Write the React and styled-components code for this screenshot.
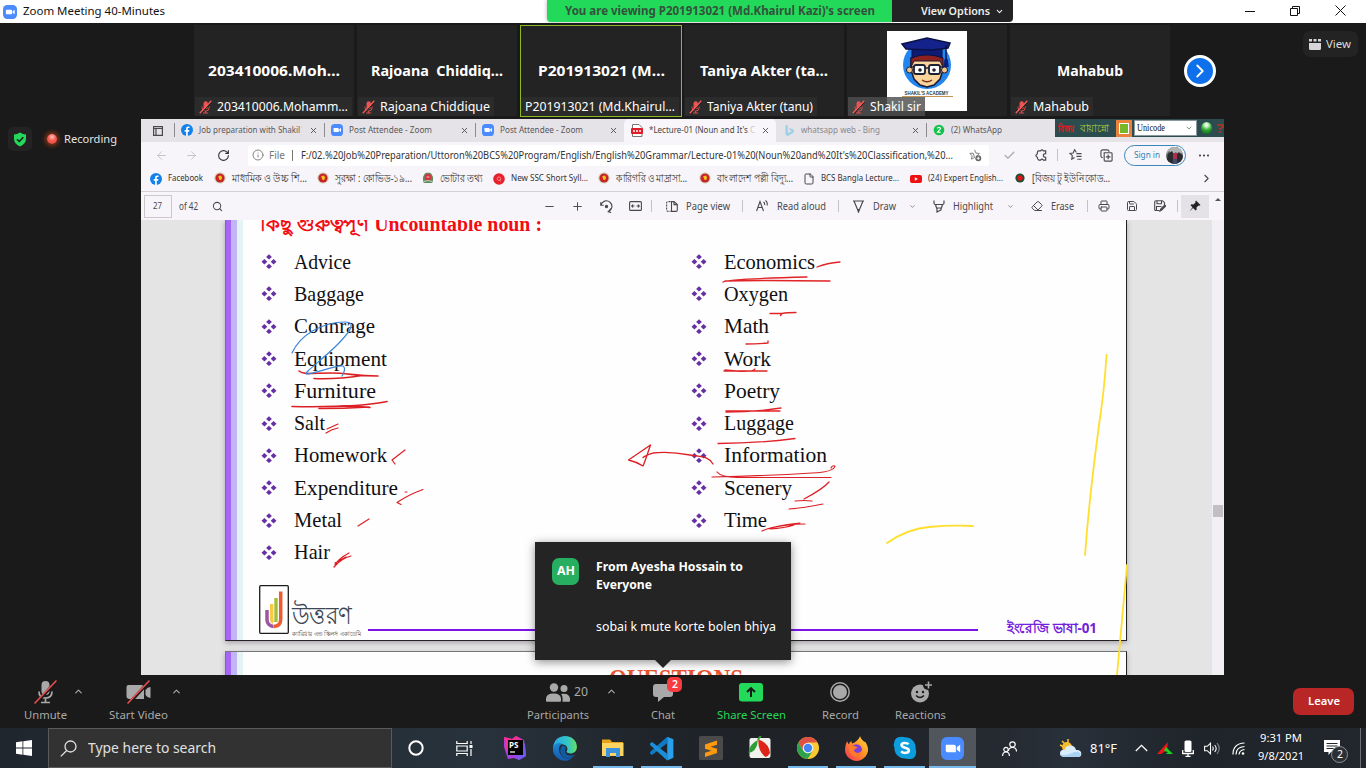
import React, { useLayoutEffect, useRef, useState } from "react";
import styled, { createGlobalStyle, css } from "styled-components";
import {
  ArrowLeft, ArrowRight, RotateCw, Info, Check, Search, Minus, Plus, ChevronDown, ChevronUp,
  ChevronRight, X, Printer, Save, Eraser, File as FileIcon,
} from "lucide-react";

const sans = `"Noto Sans", "Open Sans", sans-serif`;
const serif = `"Liberation Serif", "DejaVu Serif", serif`;

const Global = createGlobalStyle`
  * { box-sizing: border-box; }
  html, body { margin: 0; width: 1366px; height: 768px; overflow: hidden; background: #1a1a1a; }
  body { font-family: ${sans}; font-size: 11px; }
  svg { display: block; flex: none; }
`;

/* ---------- text that keeps a fixed measure ---------- */
const Measure = styled.span`
  display: block;
  flex: 0 0 auto;
  width: ${(p) => p.$w}px;
  margin-left: ${(p) => p.$ml || 0}px;
  white-space: nowrap;
  font-family: ${(p) => p.$family || sans};
  font-size: ${(p) => p.$size || 11}px;
  font-weight: ${(p) => p.$weight || 400};
  line-height: ${(p) => p.$lh || 1.3};
  color: ${(p) => p.$color || "inherit"};
`;
const Run = styled.span`
  display: inline-block;
  white-space: pre;
  transform-origin: 0 50%;
`;
function Fit({ w, children, ...rest }) {
  const ref = useRef(null);
  const [k, setK] = useState(1);
  useLayoutEffect(() => {
    if (ref.current && ref.current.offsetWidth) setK(w / ref.current.getBoundingClientRect().width);
  }, []);
  return (
    <Measure $w={w} {...rest}>
      <Run ref={ref} style={{ transform: `scaleX(${k})` }}>{children}</Run>
    </Measure>
  );
}

const Cell = styled.div`
  flex: 0 0 ${(p) => p.$w}px;
  margin-left: ${(p) => p.$ml || 0}px;
  display: flex;
  align-items: center;
  justify-content: center;
  height: 100%;
`;
const Rule = styled.i`
  display: block;
  width: 1px;
  height: ${(p) => p.$h || 12}px;
  background: ${(p) => p.$color || "#c4c2c6"};
`;
const Draw = styled.svg.attrs((p) => ({ width: p.$w, height: p.$h || p.$w, fill: "none", stroke: "currentColor" }))``;

/* ---------- window chrome ---------- */
const Window = styled.div`
  width: 1366px;
  height: 768px;
  display: flex;
  flex-direction: column;
  overflow: hidden;
  position: relative;
`;
const TitleBar = styled.header`
  height: 23px;
  background: #fff;
  color: #111;
  display: flex;
  align-items: flex-start;
`;
const TitleLeft = styled.div`
  width: 547px;
  height: 23px;
  display: flex;
  align-items: center;
  gap: 6px;
  padding-left: 3px;
`;
const ViewingBanner = styled.div`
  width: 345px;
  height: 22px;
  padding-left: 18px;
  display: flex;
  align-items: center;
  background: #23d959;
  border-radius: 0 0 0 4px;
  box-shadow: 0 0 4px rgba(0, 0, 0, 0.3);
`;
const ViewOptions = styled.div`
  width: 121px;
  height: 22px;
  padding-left: 29px;
  display: flex;
  align-items: center;
  gap: 5px;
  background: #232325;
  color: #eee;
  border-radius: 0 0 4px 0;
`;
const Controls = styled.div`
  margin-left: 227px;
  height: 21px;
  display: flex;
  align-items: center;
`;

/* ---------- gallery ---------- */
const Gallery = styled.section`
  height: 96px;
  display: flex;
  padding: 2px 0 0 194px;
  background: #1a1a1a;
`;
const Tile = styled.div`
  flex: 0 0 ${(p) => (p.$active ? 162 : 160)}px;
  height: ${(p) => (p.$active ? 92 : 91)}px;
  margin-right: ${(p) => (p.$active ? 2 : 3)}px;
  background: #232323;
  outline: ${(p) => (p.$active ? "1px solid #8bb926" : "none")};
  outline-offset: -1px;
  display: flex;
  align-items: center;
  justify-content: center;
  position: relative;
  color: #fff;
`;
const NameTag = styled.div`
  position: absolute;
  left: 1px;
  bottom: ${(p) => (p.$active ? 1 : 0)}px;
  height: 19px;
  display: flex;
  align-items: center;
  gap: 6px;
  padding: 1px 4px 0;
  background: ${(p) => (p.$light ? "rgba(78,78,78,.82)" : "#2b2b2b")};
  color: #fff;
`;
const NextButton = styled.div`
  width: 32px;
  height: 32px;
  margin: 30px 0 0 11px;
  border-radius: 50%;
  border: 3px solid #fff;
  background: #0e71eb;
  color: #fff;
  display: flex;
  align-items: center;
  justify-content: center;
`;
const ViewButton = styled.div`
  width: 55px;
  height: 26px;
  margin: 6px 0 0 87px;
  border-radius: 7px;
  background: #232323;
  color: #ddd;
  display: flex;
  align-items: center;
  padding-left: 6px;
  gap: 5px;
`;

const Stage = styled.main`
  height: 556px;
  display: flex;
  background: #1a1a1a;
`;
const Status = styled.aside`
  width: 141px;
  padding: 8px 0 0 8px;
  display: flex;
  align-items: flex-start;
  color: #e4e4e4;
`;
const ShieldBox = styled.div`
  width: 24px;
  height: 24px;
  border-radius: 5px;
  background: #232323;
  display: flex;
  align-items: center;
  justify-content: center;
`;
const RecordingRow = styled.div`
  height: 24px;
  margin-left: 15px;
  display: flex;
  align-items: center;
  gap: 7px;
`;
const RecDot = styled.i`
  width: 10px;
  height: 10px;
  border-radius: 50%;
  background: radial-gradient(circle at 50% 30%, #ffc0bc 0, #f65b50 45%, #e5443a 100%);
  box-shadow: 0 0 4px 2px rgba(205, 70, 20, 0.6);
`;

/* ---------- shared browser ---------- */
const Screen = styled.section`
  width: 1083px;
  height: 556px;
  overflow: hidden;
  background: #f7f5f9;
  color: #4a484c;
  display: flex;
  flex-direction: column;
`;
const TabBar = styled.div`
  height: 23px;
  display: flex;
  background: #e5e3e7;
`;
const Tab = styled.div`
  flex: 0 0 ${(p) => p.$w}px;
  height: 23px;
  padding-left: 7px;
  padding-bottom: 1px;
  display: flex;
  align-items: center;
  gap: 6px;
  color: #59575b;
  ${(p) => p.$active && css`background: #f8f6fa; border-radius: 5px 5px 0 0; color: #444;`}
  ${(p) => p.$pale && css`color: #8a888c;`}
`;
const TabRule = styled.i`
  width: 1px;
  height: 14px;
  margin: 4px -1px 0 0;
  background: #8d8b8f;
`;
const TabClose = styled.span`
  margin-left: auto;
  margin-right: 6px;
  color: #555;
`;
const Faded = styled.span`
  color: #c9c7cb;
`;
const ImeBar = styled.div`
  width: 170px;
  height: 18px;
  display: flex;
  align-items: center;
  background: #2b4d50;
  overflow: hidden;
`;
const ImeStatus = styled.div`
  width: 17px;
  height: 17px;
  border: 3px solid #e8823c;
  background: #fff;
  padding: 1px;
  margin-left: 7px;
`;
const ImeFill = styled.i`
  display: block;
  height: 100%;
  background: #77b82a;
`;
const ImeSelect = styled.div`
  width: 68px;
  height: 16px;
  margin-left: 2px;
  padding: 0 3px 0 2px;
  background: #fff;
  border: 1px solid #8a9a9c;
  display: flex;
  align-items: center;
  justify-content: space-between;
  color: #555;
`;
const ImeOrb = styled.i`
  width: 12px;
  height: 12px;
  margin-left: 4px;
  border-radius: 50%;
  background: radial-gradient(circle at 50% 25%, #e4ffe0 0 12%, #2fa62f 50%, #0c5c17);
`;
const AddressRow = styled.div`
  height: 26px;
  display: flex;
  align-items: center;
  padding-left: 5px;
`;
const UrlBox = styled.div`
  width: 741px;
  height: 21px;
  margin-left: 8px;
  padding-left: 4px;
  display: flex;
  align-items: center;
  background: #fff;
  border-radius: 3px;
  color: #777;
`;
const SignIn = styled.div`
  width: 62px;
  height: 21px;
  border: 1px solid #3987b8;
  border-radius: 11px;
  display: flex;
  align-items: center;
  padding-left: 9px;
  gap: 6px;
  color: #2e7fb5;
`;
const Avatar = styled.svg`
  border-radius: 50%;
`;
const Bookmarks = styled.div`
  height: 24px;
  display: flex;
  align-items: center;
  padding: 0 0 2px 9px;
  border-bottom: 1px solid #d2d0d4;
`;
const Bookmark = styled.div`
  flex: 0 0 ${(p) => p.$w}px;
  display: flex;
  align-items: center;
  gap: 6px;
`;
const PdfBar = styled.div`
  height: 28px;
  display: flex;
  align-items: center;
  padding: 0 0 0 3px;
`;
const PageBox = styled.div`
  width: 28px;
  height: 23px;
  border: 1px solid #cac8cc;
  padding-left: 8px;
  display: flex;
  align-items: center;
`;
const PinBox = styled.div`
  width: 28px;
  height: 23px;
  background: #e4e2e6;
  color: #222;
  display: flex;
  align-items: center;
  justify-content: center;
`;

/* ---------- document ---------- */
const Viewer = styled.div`
  height: 455px;
  display: flex;
  background: #e4e4e4;
  position: relative;
  overflow: hidden;
`;
const Pages = styled.div`
  width: 1071px;
  padding-left: 84px;
  display: flex;
  flex-direction: column;
  gap: 10px;
`;
const Sheet = styled.article`
  width: 902px;
  height: ${(p) => p.$h}px;
  overflow: hidden;
  border: solid #222;
  border-width: ${(p) => (p.$first ? "0 1px 1.5px 1px" : "1px 1px 0 1px")};
  border-left-color: #77718a;
  border-top-color: #777;
  box-shadow: 0 2px 5px rgba(60, 40, 70, 0.35);
  background: linear-gradient(90deg, #a566f7 0 4.5px, #c0b6f3 4.5px 11px, #e4f4f5 11px 16.5px, #fefefe 17px);
  flex: none;
`;
const Heading = styled.div`
  height: 26px;
  margin-top: -9px;
  padding-left: 34px;
  color: #f20d14;
`;
const Columns = styled.div`
  display: grid;
  grid-template-columns: 430px 1fr;
  padding: 9px 0 0 35px;
`;
const Entry = styled.div`
  height: 32.3px;
  display: flex;
  align-items: center;
  color: #101014;
`;
const SheetFooter = styled.footer`
  height: 50px;
  margin-top: 16px;
  padding-left: 33px;
  display: flex;
  align-items: flex-start;
`;
const Brand = styled.div`
  width: 69px;
  margin: 14px 0 0 3px;
`;
const FooterLine = styled.i`
  width: 610px;
  height: 2px;
  margin: 44px 29px 0 7px;
  background: #7a14ea;
`;
const FooterCode = styled.div`
  margin-top: 34px;
  color: #7420dc;
`;
const NextTitle = styled.div`
  padding: 11px 0 0 383px;
`;
const ScrollTrack = styled.div`
  width: 12px;
  background: #f2f0f4;
  padding: 285px 1px 0;
`;
const Thumb = styled.i`
  display: block;
  height: 12px;
  background: #c1bfc3;
`;
const Ink = styled.svg`
  position: absolute;
  left: 0;
  top: 0;
`;

/* ---------- chat notice ---------- */
const Notice = styled.div`
  position: absolute;
  left: 535px;
  top: 542px;
  width: 256px;
  height: 118px;
  padding: 16px 0 0 17px;
  background: #242424;
  box-shadow: 0 2px 9px rgba(0, 0, 0, 0.45);
  color: #fff;
  display: flex;
  gap: 17px;
  &::after {
    content: "";
    position: absolute;
    left: 120px;
    top: 118px;
    border: solid transparent;
    border-width: 8px 8px 0;
    border-top-color: #242424;
  }
`;
const Initials = styled.div`
  width: 27px;
  height: 27px;
  border-radius: 7px;
  background: #27ae60;
  display: flex;
  align-items: center;
  justify-content: center;
`;
const NoticeText = styled.div`
  display: flex;
  flex-direction: column;
`;

/* ---------- meeting toolbar ---------- */
const MeetingBar = styled.nav`
  height: 53px;
  display: flex;
  background: #1a1a1a;
  color: #a9a9a9;
`;
const Action = styled.div`
  flex: 0 0 ${(p) => p.$w}px;
  margin-left: ${(p) => p.$ml || 0}px;
  padding-top: 4px;
  display: flex;
  flex-direction: column;
  align-items: center;
  color: ${(p) => p.$color || "#a9a9a9"};
`;
const ActionIcon = styled.div`
  height: 26px;
  padding-left: ${(p) => p.$pl || 0}px;
  display: flex;
  align-items: center;
  gap: 4px;
  position: relative;
  margin-bottom: 3px;
`;
const More = styled.div`
  flex: 0 0 ${(p) => p.$w}px;
  min-width: 0;
  margin-left: ${(p) => p.$ml || 0}px;
  padding-top: 11px;
  display: flex;
  justify-content: center;
`;
const Badge = styled.div`
  position: absolute;
  left: 14px;
  top: -2px;
  width: 15px;
  height: 15px;
  border-radius: 5px;
  background: #f83b3f;
  color: #fff;
  display: flex;
  align-items: center;
  justify-content: center;
`;
const Leave = styled.div`
  width: 61px;
  height: 27px;
  margin: 13px 0 0 346px;
  border-radius: 7px;
  background: #b92626;
  color: #fff;
  display: flex;
  align-items: center;
  justify-content: center;
`;

/* ---------- taskbar ---------- */
const Taskbar = styled.footer`
  height: 40px;
  display: flex;
  background: linear-gradient(90deg, #20262d 0, #263039 28%, #28323c 36%, #1f242a 48%, #1f2226 62%, #262b33 74%, #28303a 78%, #1f242a 88%, #22272d);
  color: #fff;
`;
const SearchBox = styled.div`
  width: 344px;
  height: 40px;
  border: 1px solid #5a5a5a;
  background: #323232;
  color: #e0e0e0;
  display: flex;
  align-items: center;
  padding: 1px 0 0 11px;
  gap: 11px;
`;
const TaskItem = styled.div`
  flex: 0 0 ${(p) => p.$w || 48.5}px;
  display: flex;
  align-items: center;
  justify-content: center;
  position: relative;
  background: ${(p) => (p.$active ? "#50565c" : "transparent")};
  &::after {
    content: ${(p) => (p.$open ? '""' : "none")};
    position: absolute;
    bottom: 0;
    left: ${(p) => (p.$active ? 0 : 4)}px;
    right: ${(p) => (p.$active ? 0 : 4)}px;
    height: 2px;
    background: #76b9ed;
  }
`;
const Clock = styled.div`
  width: 48px;
  margin-left: 7px;
  padding-top: 1px;
  display: flex;
  flex-direction: column;
  align-items: center;
`;
const Notices = styled.div`
  width: 40px;
  margin: 0 3px 0 12px;
  padding: 12px 0 0 7px;
  position: relative;
`;
const Count = styled.div`
  position: absolute;
  left: 14px;
  top: 18px;
  width: 17px;
  height: 17px;
  border-radius: 50%;
  border: 1px solid #8c8f92;
  background: #2c3035;
  display: flex;
  align-items: center;
  justify-content: center;
`;

/* ---------- small drawings ---------- */
const ZoomLogo = ({ s = 14, r = 4 }) => (
  <svg width={s} height={s} viewBox="0 0 24 24">
    <rect width="24" height="24" rx={r * 1.8} fill="#4a8cff" />
    <path d="M5 8h8.5a2 2 0 0 1 2 2v6H7a2 2 0 0 1-2-2zM16.5 10.6 20 8v8l-3.5-2.6z" fill="#fff" />
  </svg>
);
const Facebook = () => (
  <svg width="12" height="12" viewBox="0 0 24 24">
    <circle cx="12" cy="12" r="12" fill="#1282ea" />
    <path d="M10.2 24v-8.6H7.3V12h2.9V9.4c0-3 1.700-4.600 4.400-4.600 1.100 0 2 .1 2.400.2v3h-1.700c-1.400 0-1.800.7-1.800 1.800V12h3.300l-.6 3.400h-2.700V24z" fill="#fff" />
  </svg>
);
const Seal = () => (
  <svg width="12" height="12" viewBox="0 0 12 12">
    <circle cx="6" cy="6" r="5.8" fill="#d6d8bd" />
    <circle cx="6" cy="6" r="4.600" fill="#c8232c" />
    <path d="M4.200 4.300 7 3.600l1.100 2.200L7 8.200 5.200 7.400z" fill="#f0c814" />
  </svg>
);
const VoterSeal = () => (
  <svg width="12" height="12" viewBox="0 0 12 12">
    <path d="M2.500 2 4 .8h4L9.500 2 11 5v3l-.8 3H1.800L1 8V5z" fill="#5f8a5e" />
    <circle cx="6" cy="5.300" r="3.300" fill="#d53340" />
    <path d="M2 9.500q4-2 8 0M4.500 5h3" stroke="#dfe8dc" strokeWidth=".8" fill="none" />
  </svg>
);
const RedQ = () => (
  <svg width="12" height="12" viewBox="0 0 12 12">
    <circle cx="6" cy="6" r="5.800" fill="#e8202c" />
    <circle cx="6" cy="5.700" r="1.800" fill="none" stroke="#f9a0a0" strokeWidth=".8" />
    <path d="m6.500 6.800 1.200 1.500" stroke="#f9a0a0" strokeWidth=".8" />
  </svg>
);
const Youtube = () => (
  <svg width="12" height="12" viewBox="0 0 12 12">
    <rect y="2" width="12" height="8" rx="2" fill="#ee1111" />
    <path d="M4.800 4.200 8 6 4.800 7.800z" fill="#fff" />
  </svg>
);
const FlagDot = () => (
  <svg width="12" height="12" viewBox="0 0 12 12">
    <circle cx="6" cy="6" r="4.600" fill="#164f31" />
    <circle cx="6" cy="6" r="2.700" fill="#e0121c" />
  </svg>
);
const PdfIcon = () => (
  <svg width="12" height="13" viewBox="0 0 12 13">
    <path d="M1.500.5h6.500l3 3v9h-9.500z" fill="#fff" stroke="#777" />
    <rect y="4" width="12" height="6" rx="1" fill="#e01c2c" />
    <path d="M2 7h2M5 7h2M8 7h2" stroke="#ffc4c4" strokeWidth="2" />
  </svg>
);
const Bing = () => (
  <svg width="12" height="13" viewBox="0 0 12 13">
    <path d="M2.500.8 4.800 1.600v7.600l4-2.200-2-1L5.800 3.800l5 1.900v2.800L4.800 12l-2.300-1.300z" fill="#9ccfe8" />
  </svg>
);
const WhatsApp = () => (
  <svg width="12" height="12" viewBox="0 0 12 12">
    <circle cx="6" cy="6" r="5.300" fill="#12c24c" />
    <path d="M4.300 4.500c.3-1.500 3.200-1.500 3.200.1 0 1.200-2 2-3 3.600h3.200" fill="none" stroke="#fff" strokeWidth="1.100" />
  </svg>
);
const MutedMic = () => (
  <svg width="13" height="14" viewBox="0 0 13 14" fill="none" stroke="#d8504f">
    <path d="M4.500 3.500a2.200 2.200 0 0 1 4.400 0v3.600a2.200 2.200 0 0 1-4.400 0z" fill="#e85454" stroke="none" />
    <path d="M3 6.500v1a3.600 3.600 0 0 0 7.200 0v-1M6.600 11v2M4 13h5.200" />
    <path d="M1.800 13.800 12.800 1.600" stroke="#232323" strokeWidth="1.200" />
    <path d="M.8 13.200 12.300.8" stroke="#ff5a5a" strokeWidth="1.300" />
  </svg>
);
const Student = () => (
  <svg width="80" height="80" viewBox="0 0 80 80">
    <rect width="80" height="80" fill="#fff" />
    <circle cx="40" cy="34" r="24" fill="#2386f0" />
    <path d="M24 27h31l1 12-3 9-6 6-7 2-7-2-6-6-3-9z" fill="#fbd49b" stroke="#1c1933" strokeWidth="1.500" />
    <circle cx="22.500" cy="39" r="3" fill="#f4c58b" stroke="#1c1933" />
    <circle cx="57.500" cy="39" r="3" fill="#f4c58b" stroke="#1c1933" />
    <path d="M24 36v-9l7-4h18l7 4v9l-3-6H27z" fill="#8e201e" stroke="#1c1933" />
    <path d="M25 15v12c8-4 22-4 30 0V15z" fill="#0d1b75" stroke="#0a1145" />
    <path d="m15 13 25-6 23 5-2 5-16 2-26-1z" fill="#14238b" stroke="#0a1145" strokeWidth="1.500" />
    <path d="M59 14v14" stroke="#0a1145" strokeWidth="1.500" />
    <path d="m57.500 28h3.200l1 8h-5z" fill="#0d1b75" />
    <g fill="#fff" stroke="#1c2133" strokeWidth="1.800">
      <rect x="27" y="34" width="11" height="9" rx="2" />
      <rect x="42" y="34" width="11" height="9" rx="2" />
    </g>
    <path d="M38 37h4M24 36h3M53 36h3" stroke="#1c2133" strokeWidth="1.500" />
    <circle cx="33" cy="39" r="1.800" fill="#222" />
    <circle cx="47" cy="39" r="1.800" fill="#222" />
    <path d="M35 49q5 3.500 10 0" fill="none" stroke="#7b3223" strokeWidth="1.500" />
    <text x="17.500" y="63.500" textLength="44" lengthAdjust="spacingAndGlyphs" fontFamily="Liberation Sans" fontWeight="700" fontSize="5.500" fill="#193c46">SHAKIL'S ACADEMY</text>
    <path d="M15 65.500h51" stroke="#c39753" strokeWidth="1" />
  </svg>
);
const Diamonds = () => (
  <svg width="16" height="16" viewBox="0 0 16 16" fill="#6630a4">
    <path d="m8 .3 2.900 2.600-2.900 2.600-2.900-2.600zM8 9.800l2.900 2.600L8 15l-2.900-2.600zM3.400 5l2.900 2.700-2.900 2.700-2.900-2.700zM12.600 5l2.900 2.700-2.900 2.700-2.900-2.700z" />
  </svg>
);
const UttoronMark = () => (
  <svg width="30" height="49" viewBox="0 0 30 49">
    <rect x=".7" y=".7" width="28.600" height="47.600" rx="1" fill="#fff" stroke="#1c1c1c" strokeWidth="1.300" />
    <path d="M8 25v10a6.500 6.500 0 0 0 6.500 6.500" fill="none" stroke="#9a57a2" strokeWidth="3.500" />
    <path d="M12.700 19v15.500q0 2 1.500 3" fill="none" stroke="#f9c846" strokeWidth="3.400" />
    <path d="M17 13v24" fill="none" stroke="#a5bd37" strokeWidth="3.400" />
    <path d="M21.700 6.500v28q0 6.500-7 7" fill="none" stroke="#ee5b2e" strokeWidth="3.500" />
  </svg>
);

const strokes = [
  ["#dc1f24", 1.6, "M299 371c5 4 14 2 32 2 18 0 23 3 47 3M314 378.500q22 1 48-3M292 406.500C320 407 360 407 387 401.500M319 408.500q24 0 50-1.500M330 406.500q20-1 40 1"],
  ["#dc1f24", 1.2, "M327 429 338 424M326 433q6-4 12-5M405 450l-13 10 3 4M405 492h2M423 489.500q-14 5-26 13l4 2M358 526l11-7M349 553q-11 6-14 12M351 556q-9 2-17 11M346 557l-11 6"],
  ["#3c86d8", 1.2, "M292 353C300 335 322 322 345 322C358 322 348 334 337 345C322 360 302 374 307 374C315 374 338 364 343 366C346 368 345 371 342 376"],
  ["#e02427", 1.3, "M817 267q10-4 23-5M723 282q4-3 84-5M725 281q32-1 105 0M770 313.500h12q-3 4 0 0 5-1 14-1M746 344q10 0 22-1v-2M724 371h43M725 370q28 3 30-1M726 411h54M726 412q28 0 55-4M718 443.500q38 0 77-5"],
  ["#dc1f24", 1.3, "M713 464C708 456 702 457 690 455C674 452 662 452 653 453Q646 455 643 457.500M650.5 445 628.5 460C633 461 638 463 643 466C646 459 648 452 650.5 445"],
  ["#dc1f24", 1.2, "M712 477q50-1 100-4 22-1 23-7-3-1-4 2M717 472q4 5 20 5.500h94M829 482q-6 7-25 17M795 501q9-1 17 0M789 509q15-1 34-5M762 531q10-5 38-8M767 529q20-5 38-5M770 529q15-1 24-4"],
  ["#ffdf2e", 1.800, "M1106.500 355q-2 34-7.500 70-10 75-14 130M887 543q20-14 42-16t44-1M1127 565l-10 110"],
];

const people = [
  { n: "203410006.Moh…", nw: 132, t: "203410006.Mohamm…", tw: 131, m: true },
  { n: "Rajoana  Chiddiq…", nw: 132, t: "Rajoana Chiddique", tw: 110, m: true },
  { n: "P201913021 (M…", nw: 127, t: "P201913021 (Md.Khairul…", tw: 150, active: true },
  { n: "Taniya Akter (ta…", nw: 128, t: "Taniya Akter (tanu)", tw: 106, m: true },
  { pic: true, t: "Shakil sir", tw: 51, m: true },
  { n: "Mahabub", nw: 66, t: "Mahabub", tw: 56, m: true },
];
const marks = [
  [64, <Facebook />, "Facebook", 35],
  [103, <Seal />, "মাধ্যমিক ও উচ্চ শি...", 75, true],
  [105, <Seal />, "সুরক্ষা : কোভিড-১৯...", 77, true],
  [71, <VoterSeal />, "ভোটার তথ্য", 42, true],
  [105, <RedQ />, "New SSC Short Syll...", 77],
  [101, <Seal />, "কারিগরি ও মাদ্রাসা...", 71, true],
  [104, <Seal />, "বাংলাদেশ পল্লী বিদ্যু...", 76, true],
  [107, <FileIcon size={12} strokeWidth={2} />, "BCS Bangla Lecture...", 78],
  [104, <Youtube />, "(24) Expert English...", 75],
  [180, <FlagDot />, "[বিজয় টু ইউনিকোড...", 78, true],
];
const left = [["Advice", 57], ["Baggage", 70], ["Counrage", 81], ["Equipment", 93], ["Furniture", 82], ["Salt", 31], ["Homework", 93], ["Expenditure", 104], ["Metal", 48], ["Hair", 36]];
const right = [["Economics", 91], ["Oxygen", 64], ["Math", 45], ["Work", 47], ["Poetry", 56], ["Luggage", 70], ["Information", 103], ["Scenery", 68], ["Time", 43]];

const List = ({ items }) => (
  <div>
    {items.map(([t, w]) => (
      <Entry key={t}><Diamonds /><Fit w={w} $ml={17} $size={21} $lh={1.38} $family={serif}>{t}</Fit></Entry>
    ))}
  </div>
);
const TabText = ({ w, children }) => <Fit w={w} $size={9.5}>{children}</Fit>;
const Tool = ({ w, ml, children }) => <Fit w={w} $ml={ml} $size={10}>{children}</Fit>;
const Close = () => <TabClose><X size={9} strokeWidth={2.5} /></TabClose>;
const Label = ({ w, children }) => <Fit w={w} $size={11.5}>{children}</Fit>;

const Chrome = () => (
  <svg width="24" height="24" viewBox="0 0 24 24">
    <circle cx="12" cy="12" r="11" fill="#f9c934" />
    <path d="M2.500 6.500A11 11 0 0 1 21.500 6.500H12L7.200 14.800z" fill="#df5145" />
    <path d="M2.500 6.500 7.200 14.800 12 17.500 9.800 22.800A11 11 0 0 1 2.500 6.500z" fill="#2ba24c" />
    <path d="M7.200 14.700 12 17.300 16.700 14.700 11.500 23 9.800 22.800 12 17z" fill="#2ba24c" />
    <circle cx="12" cy="12" r="5.300" fill="#f4f4f4" />
    <circle cx="12" cy="12" r="4.200" fill="#4285f4" />
  </svg>
);
const Edge = () => (
  <svg width="26" height="26" viewBox="0 0 24 24">
    <defs>
      <linearGradient id="eTop" x1="0" x2="1"><stop stopColor="#2aa7e5" /><stop offset=".6" stopColor="#31c5c7" /><stop offset="1" stopColor="#67de62" /></linearGradient>
      <linearGradient id="eLow" x1="0" x2="0" y2="1"><stop stopColor="#1b88d8" /><stop offset="1" stopColor="#1559a8" /></linearGradient>
    </defs>
    <path d="M1 11C2 4 7 1 12 1c7 0 11 5 11 10 0 4-3 6-6 6-2 0-4-.8-3.500-2 1.500-1.500 1-6-4-6.500C5 8 2 10 1 14z" fill="url(#eTop)" />
    <path d="M1 12c1-4 5-5.500 8.500-4C6 9 5.500 14 8 18c2 4 7 5 11 2-3 5-9 4-11 3-5-2-7.500-6-7-11z" fill="url(#eLow)" />
    <path d="M9.500 10C7 12 7 17 10 20c3 2.500 8 2 11.500-2-4 2-10 1-9.500-4 .2-1 .7-1.400.7-2.400 0-1-1.600-2-3.200-1.600z" fill="#125aa2" />
  </svg>
);
const PhpStorm = () => (
  <svg width="26" height="26" viewBox="0 0 26 26">
    <path d="m2 2 8 2 4-3 8 4 2 16-7 4-5-2-6 1-4-12z" fill="#a640e0" />
    <path d="m2 2 8 2 4-3 6 4-10 10-6 0z" fill="#f52f92" />
    <path d="m14 22 9-14 1 13-7 4z" fill="#7359f1" />
    <rect x="6" y="5" width="15" height="15" fill="#000" />
    <text x="7" y="12.500" fontFamily="Noto Sans" fontWeight="700" fontSize="8" fill="#fff">PS</text>
    <path d="M8 17h5" stroke="#fff" strokeWidth="1.200" />
  </svg>
);
const Explorer = () => (
  <svg width="24" height="22" viewBox="0 0 24 22">
    <path d="M1 2.500h8l2 2.500h11v14H1z" fill="#e5a31c" />
    <path d="M1 6h21.500v13H1z" fill="#fcd462" />
    <path d="M5 20v-9h14v9h-4v-4H9v4z" fill="#3a93dc" />
  </svg>
);
const Code = () => (
  <svg width="25" height="25" viewBox="0 0 24 24">
    <path d="M17.500.6 23.400 3.200v17.600l-5.900 2.600z" fill="#2aa0ea" />
    <path d="m17.500.6.1 6.200L3 18.300 1 16.900v-1.600z" fill="#0f7ac4" />
    <path d="m17.500 23.400.1-6.200L3 5.700 1 7.100v1.600z" fill="#1c8ed8" />
  </svg>
);
const Sublime = () => (
  <svg width="24" height="24" viewBox="0 0 24 24">
    <rect width="24" height="24" rx="1.500" fill="#4a4a4a" />
    <path d="m6 8.500 12-4v4.200l-6.500 2 6.500 2.100v4.200l-12 4v-4.200l6.500-2.100L6 12.700z" fill="#ff9a0c" />
  </svg>
);
const Melon = () => (
  <svg width="24" height="24" viewBox="0 0 24 24">
    <rect x="1.500" y="2" width="21" height="20" rx="2" fill="#f1f1ee" />
    <path d="M10 4Q1 8 .5 17q3 0 6-3 3-4 3.500-10z" fill="#2f9d35" />
    <path d="M10.500 3.500q-1 11 7 17.500 3-1 4.500-4-1-10-11.500-13.500z" fill="#dd2417" />
    <path d="M10 4q1-2.500 3-4" stroke="#3a9a2a" strokeWidth="2" fill="none" />
  </svg>
);
const Firefox = () => (
  <svg width="25" height="25" viewBox="0 0 24 24">
    <defs><linearGradient id="fx" x1="1" x2="0" y2="1"><stop stopColor="#ffe43b" /><stop offset=".45" stopColor="#ff9326" /><stop offset="1" stopColor="#f22b5d" /></linearGradient></defs>
    <path d="M15.500 0c.3 3 3 4 4 6l.5-1c2 3 3.500 6 3 9.500C22 20 17.500 24 12 24S1 19.500 1 13.500c0-3 .6-6 2-8.500l1.300 3L7 4.500l.7 2.700C11 6 14 4 15.500 0z" fill="url(#fx)" />
    <circle cx="12" cy="13" r="5.200" fill="#7b3fd8" />
    <path d="M5 10c3-2 6 0 8 1-1 1-3 1-3.500 3 1.500 3 6 3 8-.5 0 5-4 6-6 6-4 0-7-4-6.500-9.500z" fill="#ff7a2a" />
  </svg>
);
const Skype = () => (
  <svg width="24" height="24" viewBox="0 0 24 24">
    <path d="M7 1q3-.5 5 .3A10.500 10.500 0 0 1 22.600 12.500Q24 16 22.500 19.500T17 23q-3 .3-5-.4A10.500 10.500 0 0 1 1.400 12Q0 9 1.500 5T7 1z" fill="#0b9ddd" />
    <path d="M15.500 8.300c-1.600-2-7-2-7 .8 0 3.600 7.300 1.700 7.300 5.300 0 3.100-5.800 3.200-7.600.8" fill="none" stroke="#fff" strokeWidth="2.500" />
  </svg>
);

export default function App() {
  return (
    <>
      <Global />
      <Window>
        <TitleBar>
          <TitleLeft><ZoomLogo /><Fit w={142} $size={11.5} $color="#111">Zoom Meeting 40-Minutes</Fit></TitleLeft>
          <ViewingBanner><Fit w={310} $size={11.5} $weight={700} $color="#34513e">You are viewing P201913021 (Md.Khairul Kazi)'s screen</Fit></ViewingBanner>
          <ViewOptions><Fit w={69} $size={11.5} $weight={600}>View Options</Fit><ChevronDown size={9} strokeWidth={3} /></ViewOptions>
          <Controls>
            <Cell $w={20}><Draw $w={10} viewBox="0 0 10 10"><path d="M0 5.500h10" /></Draw></Cell>
            <Cell $w={20} $ml={25}><Draw $w={10} viewBox="0 0 10 10"><path d="M.5 2.500h7v7h-7zM2.500 2.500v-2h7v7h-2" /></Draw></Cell>
            <Cell $w={20} $ml={25}><Draw $w={11} viewBox="0 0 11 11"><path d="m.5.5 10 10M10.500.5l-10 10" /></Draw></Cell>
          </Controls>
        </TitleBar>

        <Gallery>
          {people.map((p) => (
            <Tile key={p.t} $active={p.active}>
              {p.pic ? <Student /> : <Fit w={p.nw} $size={15} $weight={700}>{p.n}</Fit>}
              <NameTag $active={p.active} $light={p.pic}>
                {p.m && <MutedMic />}
                <Fit w={p.tw} $size={12.5} $ml={p.m ? -1 : 0}>{p.t}</Fit>
              </NameTag>
            </Tile>
          ))}
          <NextButton><ChevronRight size={22} strokeWidth={2} /></NextButton>
          <ViewButton>
            <svg width="12" height="11" viewBox="0 0 12 11" fill="#d6d6d6"><path d="M0 0h3v2.500H0zM4.500 0h3v2.500h-3zM9 0h3v2.500H9zM0 4h12v5.500a1.500 1.500 0 0 1-1.500 1.500h-9A1.500 1.500 0 0 1 0 9.500z" /></svg>
            <Fit w={25} $size={11.5}>View</Fit>
          </ViewButton>
        </Gallery>

        <Stage>
          <Status>
            <ShieldBox>
              <svg width="14" height="15" viewBox="0 0 14 15"><path d="M7 .5q3 2 6 2V7q0 5-6 7.500Q1 12 1 7V2.500q3 0 6-2z" fill="#23d959" /><path d="m4 7.300 2.300 2.200 4-4.200" fill="none" stroke="#1a1a1a" strokeWidth="1.500" /></svg>
            </ShieldBox>
            <RecordingRow><RecDot /><Fit w={53} $size={11.5}>Recording</Fit></RecordingRow>
          </Status>

          <Screen>
            <TabBar>
              <Cell $w={33}><Draw $w={10} viewBox="0 0 10 10" strokeWidth="1.200"><path d="M.6.6h8.800v8.800H.6zM.6 2.500h8.800M3 2.500v7" /></Draw></Cell>
              <TabRule /><Tab $w={150}><Facebook /><TabText w={103}>Job preparation with Shakil<Faded>'</Faded></TabText><Close /></Tab>
              <TabRule /><Tab $w={151}><ZoomLogo s={12} /><TabText w={83}>Post Attendee - Zoom</TabText><Close /></Tab>
              <TabRule /><Tab $w={149}><ZoomLogo s={12} /><TabText w={83}>Post Attendee - Zoom</TabText><Close /></Tab>
              <Tab $w={151} $active><PdfIcon /><TabText w={106}>*Lecture-01 (Noun and It's <Faded>C</Faded></TabText><Close /></Tab>
              <Tab $w={150} $pale><Bing /><TabText w={79}>whatsapp web - Bing</TabText><Close /></Tab>
              <TabRule /><Tab $w={129}><WhatsApp /><TabText w={51}>(2) WhatsApp</TabText></Tab>
              <ImeBar>
                <Fit w={16} $size={10} $weight={700} $ml={3} $color="#f0141c">বিজয়</Fit>
                <Fit w={29} $size={11} $ml={6} $color="#a6c83b">বায়ান্নো</Fit>
                <ImeStatus><ImeFill /></ImeStatus>
                <ImeSelect><Fit w={28} $size={9.5} $family={serif} $color="#111">Unicode</Fit><ChevronDown size={8} /></ImeSelect>
                <ImeOrb />
                <Fit w={8} $size={13} $weight={700} $ml={4} $color="#a63328">?</Fit>
              </ImeBar>
            </TabBar>
            <AddressRow>
              <Cell $w={30}><ArrowLeft size={13} color="#c4c2c6" strokeWidth={1.800} /></Cell>
              <Cell $w={30}><ArrowRight size={13} color="#c4c2c6" strokeWidth={1.800} /></Cell>
              <Cell $w={34}><RotateCw size={13} color="#333" strokeWidth={2} /></Cell>
              <UrlBox>
                <Info size={12} strokeWidth={1.800} />
                <Fit w={16} $ml={5} $size={10}>File</Fit>
                <Cell $w={14}><Rule $h={11} $color="#777" /></Cell>
                <Fit w={652} $ml={2} $size={10} $color="#333">F:/02.%20Job%20Preparation/Uttoron%20BCS%20Program/English/English%20Grammar/Lecture-01%20(Noun%20and%20It's%20Classification,%20...</Fit>
                <Cell $w={16} $ml={14}><Draw $w={13} viewBox="0 0 14 14"><path d="m6 1 1.500 3.400 3.700.4-2.700 2.500.5 1.500M6 9.200 2.700 11l.7-3.700L.8 4.800l3.700-.4z" /><circle cx="10" cy="10" r="3.200" fill="#666" stroke="none" /><path d="M10 8.300v3.400M8.300 10h3.400" stroke="#fff" /></Draw></Cell>
              </UrlBox>
              <Cell $w={40}><Check size={13} color="#aaa" strokeWidth={2.200} /></Cell>
              <Cell $w={24}><Draw $w={13} viewBox="0 0 14 14" strokeWidth="1.300"><path d="M4 2h2q1.500-2 3 0h2.500v3q-2.500 0-2.500 2t2.500 2v3H9q-1.500-2-3 0H4q-1.500-.5-1.500-3Q1 8 1 7t1.500-2Q2.500 2 4 2z" /></Draw></Cell>
              <Cell $w={9}><Rule /></Cell>
              <Cell $w={26}><Draw $w={13} viewBox="0 0 14 14" strokeWidth="1.200"><path d="M8 3.800 6 .8l-1.500 3.500-3.500.4 2.600 2.500L3 11l3-1.800M8 5h5.500M8 8h5.500M9 11h4.500" /></Draw></Cell>
              <Cell $w={36}><Draw $w={13} viewBox="0 0 14 14" strokeWidth="1.200"><path d="M3 9.500Q1 9 1 7.500V3q0-2 2-2h4.500Q9.500 1 10 3M4.500 4H12q1 0 1 1v7q0 1-1 1H5.500q-1 0-1-1zM8.800 6v5M6.300 8.500h5" /></Draw></Cell>
              <SignIn>
                <Fit w={26} $size={9.5}>Sign in</Fit>
                <Avatar width="17" height="17" viewBox="0 0 17 17"><rect width="17" height="17" fill="#5d6160" /><path d="M0 0h17v5l-4 3-3-3-3 2-4-3-3 4z" fill="#b0b5b4" /><path d="M2 7l4-3 3 5 4-4 4 4v8H0z" fill="#292b30" /><path d="M7 6h4v6H7z" fill="#b0304b" /><path d="M7 12h4v5H7z" fill="#414c6d" /></Avatar>
              </SignIn>
              <Cell $w={36}><svg width="10" height="3" viewBox="0 0 10 3" fill="#333"><circle cx="1" cy="1.500" r="1" /><circle cx="5" cy="1.500" r="1" /><circle cx="9" cy="1.500" r="1" /></svg></Cell>
            </AddressRow>
            <Bookmarks>
              {marks.map(([w, icon, t, tw, bn]) => (
                <Bookmark key={t} $w={w}>{icon}<Fit w={tw} $size={bn ? 10.5 : 9.5} $color="#333">{t}</Fit></Bookmark>
              ))}
              <Cell $w={12} $ml={6}><ChevronRight size={13} /></Cell>
            </Bookmarks>
            <PdfBar>
              <PageBox><Fit w={9} $size={9.5}>27</Fit></PageBox>
              <Tool w={19} ml={7}>of 42</Tool>
              <Cell $w={39}><Search size={11} strokeWidth={2.200} /></Cell>
              <Cell $w={28} $ml={298}><Minus size={13} strokeWidth={1.800} /></Cell>
              <Cell $w={29}><Plus size={13} strokeWidth={1.800} /></Cell>
              <Cell $w={28}><Draw $w={13} viewBox="0 0 14 14" strokeWidth="1.200"><path d="M1 5.500A6 6 0 1 1 9 12.500M.8 2.500v3.200H4M12 9l-3.200 3.500L12 13.500" /><circle cx="7" cy="7" r="1.200" fill="currentColor" /></Draw></Cell>
              <Cell $w={30}><Draw $w={13} $h={10} viewBox="0 0 13 10" strokeWidth="1.100"><rect x=".6" y=".6" width="11.800" height="8.800" rx="1" /><path d="M3 5h2.500M7.500 5H10M4 3.500 2.700 5 4 6.500M9 3.500 10.300 5 9 6.500" /></Draw></Cell>
              <Cell $w={3}><Rule /></Cell>
              <Cell $w={28} $ml={5}><Draw $w={12} $h={11} viewBox="0 0 12 11" strokeWidth="1.100"><path d="M4.500.6H2q-1.400 0-1.400 1.400v7Q.6 10.400 2 10.400h2.500" strokeDasharray="2 1" /><path d="M5.500.6H8l3.300 3v5.400q0 1.400-1.300 1.400H5.500zM8 .6v3h3.300" /></Draw></Cell>
              <Tool w={44}>Page view</Tool>
              <Cell $w={24}><Rule /></Cell>
              <Cell $w={16}><Draw $w={12} viewBox="0 0 12 12" strokeWidth="1.100"><path d="M.6 11 4 1.500 7.500 11M2 7.500h4M7.500 2q1.500 1 1 3M9.500.5q2.500 2 1.500 5" /></Draw></Cell>
              <Tool w={49} ml={7}>Read aloud</Tool>
              <Cell $w={25}><Rule /></Cell>
              <Cell $w={14}><Draw $w={13} viewBox="0 0 13 13" strokeWidth="1.200"><path d="M1 1h11M2 1l3.500 8.500h2L11 1M5.500 9.500 6.500 12l1-2.500" /></Draw></Cell>
              <Tool w={23} ml={8}>Draw</Tool>
              <Cell $w={32}><ChevronDown size={7} /></Cell>
              <Cell $w={22}><Draw $w={12} $h={13} viewBox="0 0 12 13" strokeWidth="1.200"><path d="M1 .5V3q0 1.500 1.500 1.500h7Q11 4.500 11 3V.5M2.500 4.500 3.500 8h5l1-3.500M4 8v4l4-2V8" /></Draw></Cell>
              <Tool w={40} ml={3}>Highlight</Tool>
              <Cell $w={34}><ChevronDown size={7} /></Cell>
              <Cell $w={20}><Eraser size={12} strokeWidth={2} /></Cell>
              <Tool w={23} ml={4}>Erase</Tool>
              <Cell $w={6} $ml={10}><Rule /></Cell>
              <Cell $w={28}><Printer size={12} strokeWidth={2} /></Cell>
              <Cell $w={28}><Save size={12} strokeWidth={2} /></Cell>
              <Cell $w={28}><Draw $w={12} viewBox="0 0 12 12" strokeWidth="1.100"><path d="M5.500 10.500H1.700Q.7 10.500.7 9.500V2q0-1.300 1.300-1.300h6.500l2 2V5M3 .7v3h4.500v-3M2.500 10V6.500h5" /><path d="m6 11 .7-2 4-4 1 1-4 4z" fill="currentColor" /></Draw></Cell>
              <Cell $w={7}><Rule /></Cell>
              <PinBox><svg width="12" height="12" viewBox="0 0 12 12"><path d="M7 .5 11.500 5l-1 .8-1-.2-2 2 .2 2-1 1L4 8 .5 11.500 3.500 7.300 1.500 5.300l1-1 2 .2 2-2-.2-1z" fill="#222" /></svg></PinBox>
              <Cell $w={12} $ml={3}><svg width="6" height="18" viewBox="0 0 6 18"><path d="m0 4 3-3 3 3z" fill="#555" /></svg></Cell>
            </PdfBar>

            <Viewer>
              <Pages>
                <Sheet $first $h={421}>
                  <Heading><Fit w={282} $size={20} $weight={700} $family={serif}>কিছু গুরুত্বপূর্ণ Uncountable noun :</Fit></Heading>
                  <Columns><List items={left} /><List items={right} /></Columns>
                  <SheetFooter>
                    <UttoronMark />
                    <Brand>
                      <Fit w={60} $size={25} $lh={1.25} $weight={500} $color="#3d4756">উত্তরণ</Fit>
                      <Fit w={69} $size={7} $lh={1} $color="#444">ক্যারিয়ার এন্ড স্কিলস একাডেমি</Fit>
                    </Brand>
                    <FooterLine />
                    <FooterCode><Fit w={90} $size={14} $weight={700}>ইংরেজি ভাষা-01</Fit></FooterCode>
                  </SheetFooter>
                </Sheet>
                <Sheet $h={60}>
                  <NextTitle><Fit w={134} $size={25} $weight={700} $family={serif} $color="#e8542f">QUESTIONS</Fit></NextTitle>
                </Sheet>
              </Pages>
              <ScrollTrack><Thumb /></ScrollTrack>
              <Ink width="1083" height="455" viewBox="141 220 1083 455" fill="none" strokeLinecap="round" strokeLinejoin="round">
                {strokes.map(([c, w, d]) => <path key={d} d={d} stroke={c} strokeWidth={w} />)}
              </Ink>
            </Viewer>
          </Screen>
        </Stage>

        <MeetingBar>
          <Action $w={46} $ml={22}>
            <ActionIcon>
              <svg width="26" height="26" viewBox="0 0 26 26"><rect x="9.500" y="2" width="8" height="14" rx="4" fill="#a9a9a9" /><path d="M7 12.500q0 6.500 6.500 6.500t6.500-6.500M13.500 19v4M9 23.500h9" fill="none" stroke="#a9a9a9" strokeWidth="1.700" /><path d="M3.500 25 25 1.500" stroke="#1a1a1a" strokeWidth="3" /><path d="M2.500 24.500 24.500 1.500" stroke="#f0504f" strokeWidth="1.500" /></svg>
            </ActionIcon>
            <Label w={43}>Unmute</Label>
          </Action>
          <More $w={20}><ChevronUp size={11} strokeWidth={2.500} /></More>
          <Action $w={68} $ml={16}>
            <ActionIcon>
              <svg width="26" height="26" viewBox="0 0 26 26"><path d="M3.500 6H16q3 0 3 3v11H4.500q-3 0-3-3V8q0-2 2-2zM20.500 11q2-3 5-3v11q-3 0-5-3z" fill="#a9a9a9" /><path d="M3.500 25 25 1.500" stroke="#1a1a1a" strokeWidth="3" /><path d="M2.500 24.500 24.500 1.500" stroke="#f0504f" strokeWidth="1.500" /></svg>
            </ActionIcon>
            <Label w={59}>Start Video</Label>
          </Action>
          <More $w={8}><ChevronUp size={11} strokeWidth={2.500} /></More>
          <Action $w={70} $ml={343}>
            <ActionIcon $pl={18}>
              <svg width="24" height="19" viewBox="0 0 24 19" fill="#a9a9a9"><circle cx="8" cy="4.500" r="4.200" /><circle cx="18" cy="5.500" r="3.500" /><path d="M0 18v-2.500Q.5 10.500 7.500 10.500T15 15.500V18q0 .7-1 .7H1Q0 18.700 0 18zM15 11q8-1.500 9 4.500V18q0 .7-1 .7h-6.500Q17 13 15 11z" /></svg>
              <Fit w={14} $size={12} $lh="22px">20</Fit>
            </ActionIcon>
            <Label w={62}>Participants</Label>
          </Action>
          <More $w={16} $ml={10}><ChevronUp size={11} strokeWidth={2.500} /></More>
          <Action $w={40} $ml={24}>
            <ActionIcon>
              <svg width="20" height="19" viewBox="0 0 20 19"><path d="M3 1h14q3 0 3 3v7q0 3-3 3h-6l-6 5v-5H3q-3 0-3-3V4q0-3 3-3z" fill="#a9a9a9" /></svg>
              <Badge><Fit w={6} $size={10.5} $weight={600}>2</Fit></Badge>
            </ActionIcon>
            <Label w={24}>Chat</Label>
          </Action>
          <Action $w={72} $ml={32} $color="#23d959">
            <ActionIcon>
              <svg width="24" height="19" viewBox="0 0 24 19"><rect width="24" height="18.500" rx="3" fill="#23d959" /><path d="M12 14V5.500M8 9l4-3.800L16 9" fill="none" stroke="#1a1a1a" strokeWidth="2" /></svg>
            </ActionIcon>
            <Label w={69}>Share Screen</Label>
          </Action>
          <Action $w={40} $ml={33}>
            <ActionIcon>
              <svg width="20" height="20" viewBox="0 0 20 20"><circle cx="10" cy="10" r="9.200" fill="none" stroke="#a9a9a9" strokeWidth="1.500" /><circle cx="10" cy="10" r="7" fill="#a9a9a9" /></svg>
            </ActionIcon>
            <Label w={37}>Record</Label>
          </Action>
          <Action $w={54} $ml={33}>
            <ActionIcon $pl={3}>
              <svg width="21" height="22" viewBox="0 0 21 22"><circle cx="9" cy="12.500" r="9" fill="#a9a9a9" /><circle cx="6" cy="11" r="1.200" fill="#1a1a1a" /><circle cx="12" cy="11" r="1.200" fill="#1a1a1a" /><path d="M5 14.500q4 4 8 0" stroke="#1a1a1a" strokeWidth="1.400" fill="none" /><circle cx="17" cy="4" r="5" fill="#1a1a1a" /><path d="M17.500.5v7M14 4h7" stroke="#a9a9a9" strokeWidth="1.600" /></svg>
            </ActionIcon>
            <Label w={51}>Reactions</Label>
          </Action>
          <Leave><Fit w={32} $size={11.5} $weight={600}>Leave</Fit></Leave>
        </MeetingBar>

        <Taskbar>
          <TaskItem $w={48}><svg width="16" height="16" viewBox="0 0 16 16" fill="#fff"><path d="M0 2.200 6.500 1.300v6.300H0zM7.300 1.200 16 0v7.600H7.300zM0 8.400h6.500v6.300L0 13.800zM7.300 8.400H16V16l-8.700-1.200z" /></svg></TaskItem>
          <SearchBox>
            <Draw $w={17} viewBox="0 0 17 17" strokeWidth="1.300"><circle cx="10.500" cy="6.500" r="5.500" /><path d="M6.700 10.500.8 16.400" /></Draw>
            <Fit w={128} $size={14}>Type here to search</Fit>
          </SearchBox>
          <TaskItem $w={48}><Draw $w={16} viewBox="0 0 16 16" strokeWidth="2"><circle cx="8" cy="8" r="6.700" /></Draw></TaskItem>
          <TaskItem $w={49}><Draw $w={17} viewBox="0 0 17 17" strokeWidth="1.200"><path d="M.8 1v2.500h10.400V1M.8 16v-2.500h10.400V16M.8 6h10.400v5H.8zM15 1v3M15 9v7" /><path d="M13.500 5h3v3h-3z" fill="#fff" stroke="none" /></Draw></TaskItem>
          <TaskItem $w={51}><PhpStorm /></TaskItem>
          <TaskItem $w={49}><Edge /></TaskItem>
          <TaskItem $w={48} $open><Explorer /></TaskItem>
          <TaskItem $w={49} $open><Code /></TaskItem>
          <TaskItem $w={50}><Sublime /></TaskItem>
          <TaskItem $w={48}><Melon /></TaskItem>
          <TaskItem $w={48} $open><Chrome /></TaskItem>
          <TaskItem $w={48} $open><Firefox /></TaskItem>
          <TaskItem $w={49} $open><Skype /></TaskItem>
          <TaskItem $w={47} $open $active><ZoomLogo s={23} r={3.500} /></TaskItem>
          <Cell $w={48} $ml={9}><Draw $w={15} viewBox="0 0 15 15" strokeWidth="1.200"><circle cx="10.500" cy="3.500" r="2.700" /><path d="M6.500 10q0-3.500 4-3.500t4 4" /><circle cx="4" cy="8.500" r="2.200" /><path d="M.6 15q0-4 3.400-4t3.400 4" /></Draw></Cell>
          <Cell $w={26} $ml={24}>
            <svg width="24" height="20" viewBox="0 0 24 20"><path d="M10 1v4M2 7l4 2M4 3l3 3" stroke="#f5c52c" strokeWidth="1.500" /><circle cx="9" cy="9" r="5" fill="#f7bd2c" /><path d="M6 19Q1.500 18.500 2 15t4.500-3.200Q8 7.500 12.500 7.500T18 12q5-.5 5.300 3.500T19 19z" fill="#d9edfb" /><path d="M6 19q-3-.5-3.500-2.500Q8 18 14 15t9 1q-1 3-4 3z" fill="#a9d2f3" /></svg>
          </Cell>
          <Cell $w={28} $ml={6}><Fit w={27} $size={13} $lh={1.4}>81°F</Fit></Cell>
          <Cell $w={22} $ml={13}><Draw $w={13} $h={8} viewBox="0 0 13 8" strokeWidth="1.300"><path d="m.8 7 5.700-5.700L12.200 7" /></Draw></Cell>
          <Cell $w={22} $ml={2}><svg width="16" height="12" viewBox="0 0 16 12"><path d="M11 0 0 12h4l6-4z" fill="#f01414" /><path d="M9 5l7 7H9l2-2-4-1z" fill="#18d81c" /></svg></Cell>
          <Cell $w={22} $ml={1}><Draw $w={12} $h={17} viewBox="0 0 12 17" strokeWidth="1.300"><rect x="2.500" y=".5" width="7" height="11.500" rx="1.500" fill="#fff" stroke="none" /><path d="M.7 10v3.500h10.600V10M6 13.500v3M3.500 16.300h5" /></Draw></Cell>
          <Cell $w={24} $ml={1}><Draw $w={17} $h={13} viewBox="0 0 17 13" strokeWidth="1.100"><path d="M.6 4.300h2.700L6.500 1.200v10.600L3.300 8.700H.6zM8.500 4.500q1.500 2 0 4M10.700 3q3 3.500 0 7" /><path d="M13 1.200q4.500 5.300 0 10.600" stroke="#81858a" /></Draw></Cell>
          <Cell $w={24} $ml={2}><Draw $w={13} viewBox="0 0 13 13" strokeWidth="1.200"><path d="M1 12.500Q1 1.500 12.500 1M4 12.500Q4 5 12.500 4.500M7 12.500Q7.500 8 12.500 7.500" /><circle cx="11" cy="11.500" r="1.300" fill="#fff" stroke="none" /></Draw></Cell>
          <Clock>
            <Fit w={42} $size={11.300} $lh={1.6}>9:31 PM</Fit>
            <Fit w={46} $size={11.300} $lh={1.6}>9/8/2021</Fit>
          </Clock>
          <Notices>
            <svg width="16" height="15" viewBox="0 0 16 15"><path d="M0 0h16v12H7l-2.500 3v-3H0z" fill="#fff" /><path d="M2.500 3.500h11M2.500 6h11M2.500 8.500h7" stroke="#23272c" /></svg>
            <Count><Fit w={6} $size={10.500}>2</Fit></Count>
          </Notices>
          <Rule $h={40} $color="#6b6f73" />
        </Taskbar>

        <Notice>
          <Initials><Fit w={18} $size={12.5} $weight={700}>AH</Fit></Initials>
          <NoticeText>
            <Fit w={147} $size={12} $weight={700} $lh="17px">From Ayesha Hossain to</Fit>
            <Fit w={56} $size={12} $weight={700} $lh="19px">Everyone</Fit>
            <Fit w={180} $size={12} $lh="66px">sobai k mute korte bolen bhiya</Fit>
          </NoticeText>
        </Notice>
      </Window>
    </>
  );
}
